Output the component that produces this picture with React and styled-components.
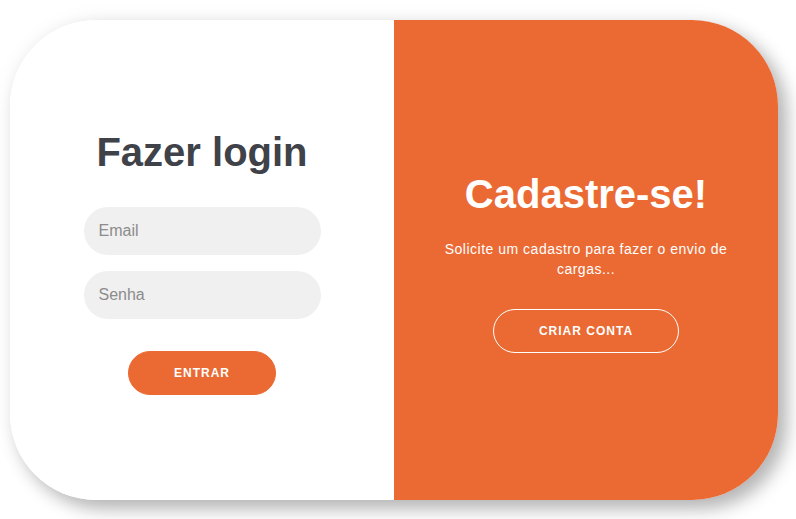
import React from 'react';
import styled, { createGlobalStyle } from 'styled-components';

const colors = {
  orange: '#eb6a33',
  ink: '#3f4249',
  field: '#f0f0f0',
  placeholder: '#8c8c8c',
};

const GlobalStyle = createGlobalStyle`
  body {
    margin: 0;
    background: #fff;
    font-family: 'Liberation Sans', Arial, sans-serif;
  }
`;

const Page = styled.div`
  padding: 20px 18px 19px 10px;
`;

const Card = styled.div`
  display: grid;
  grid-template-columns: 384px 384px;
  width: 768px;
  height: 480px;
  border-radius: 86px;
  overflow: hidden;
  background: #fff;
  box-shadow: 9px 9px 18px rgba(0, 0, 0, 0.28), 0 0 22px rgba(0, 0, 0, 0.05);
`;

const Panel = styled.div`
  display: flex;
  flex-direction: column;
  align-items: center;
  justify-content: center;
  text-align: center;
  padding: ${(p) => (p.$accent ? '3px' : '4px')} 40px 0;
  background: ${(p) => (p.$accent ? colors.orange : '#fff')};
  color: ${(p) => (p.$accent ? '#fff' : colors.ink)};
`;

const Title = styled.h1`
  margin: 0;
  font-size: 40px;
  font-weight: bold;
  line-height: 46px;
`;

const Form = styled.form`
  display: flex;
  flex-direction: column;
  align-items: center;
  margin-top: 4px;
`;

const Input = styled.input`
  box-sizing: border-box;
  width: 237px;
  height: 48px;
  margin: ${(p) => (p.$first ? '28px 0 8px' : '8px 0')};
  padding: 0 15px;
  border: none;
  border-radius: 24px;
  background: ${colors.field};
  font-family: 'Liberation Sans', Arial, sans-serif;
  font-size: 16px;
  outline: none;

  &::placeholder {
    color: ${colors.placeholder};
  }
`;

const Button = styled.button`
  box-sizing: border-box;
  height: 44px;
  margin-top: ${(p) => p.$top || 0}px;
  padding: 0 45px;
  border: 1px solid ${(p) => (p.$ghost ? '#fff' : colors.orange)};
  border-radius: 22px;
  background: ${(p) => (p.$ghost ? 'transparent' : colors.orange)};
  color: #fff;
  font-family: 'Liberation Sans', Arial, sans-serif;
  font-size: 12px;
  font-weight: bold;
  letter-spacing: 1px;
  text-transform: uppercase;
  cursor: pointer;
`;

const Text = styled.p`
  margin: 22px 0 30px;
  font-size: 14px;
  line-height: 20px;
  letter-spacing: 0.5px;
`;

export default function App() {
  return (
    <Page>
      <GlobalStyle />
      <Card>
        <Panel>
          <Title>Fazer login</Title>
          <Form onSubmit={(e) => e.preventDefault()}>
            <Input $first type="email" placeholder="Email" />
            <Input type="password" placeholder="Senha" />
            <Button $top={24} type="submit">Entrar</Button>
          </Form>
        </Panel>
        <Panel $accent>
          <Title>Cadastre-se!</Title>
          <Text>Solicite um cadastro para fazer o envio de cargas...</Text>
          <Button $ghost>Criar conta</Button>
        </Panel>
      </Card>
    </Page>
  );
}
